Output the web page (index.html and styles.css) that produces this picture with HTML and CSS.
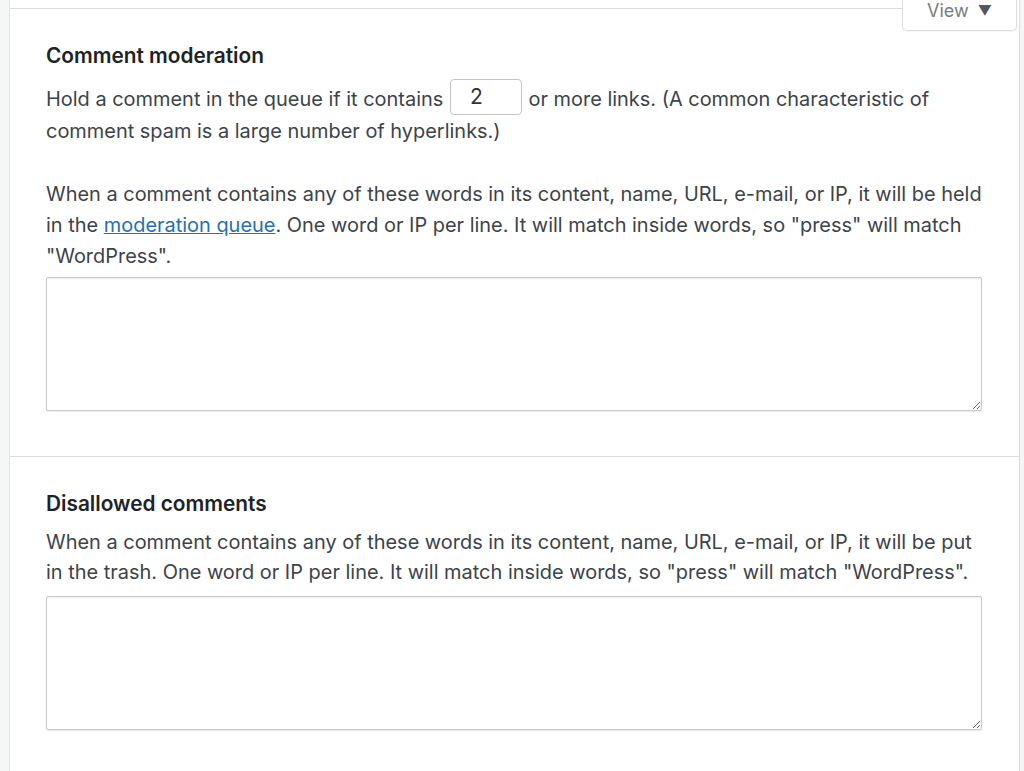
FILE: index.html
```html
<!DOCTYPE html>
<html lang="en">
<head>
<meta charset="utf-8">
<title>Discussion Settings</title>
<link rel="stylesheet" href="styles.css">
</head>
<body>
<div class="panel">
  <div class="topbar">
    <div class="topline"></div>
    <button class="view-tab" type="button">View <span class="caret">▼</span></button>
  </div>

  <section class="section first">
    <h2 class="title">Comment moderation</h2>
    <p class="text links">Hold a comment in the queue if it contains <input class="num" type="text" value="2"> or more links. (A common characteristic of comment spam is a large number of hyperlinks.)</p>
    <p class="text gap">When a comment contains any of these words in its content, name, URL, e-mail, or IP, it will be held in the <a href="#">moderation queue</a>. One word or IP per line. It will match inside words, so "press" will match "WordPress".</p>
    <textarea class="box"></textarea>
  </section>

  <section class="section second">
    <h2 class="title">Disallowed comments</h2>
    <p class="text tight">When a comment contains any of these words in its content, name, URL, e-mail, or IP, it will be put in the trash. One word or IP per line. It will match inside words, so "press" will match "WordPress".</p>
    <textarea class="box box2"></textarea>
  </section>
</div>
</body>
</html>
```

FILE: styles.css
```css
html, body {
  margin: 0;
  padding: 0;
  height: 100%;
}
body {
  background: #f5f6f6;
  font-family: Inter, "Noto Sans", "Liberation Sans", sans-serif;
  color: #3c434a;
  overflow: hidden;
}
.panel {
  margin: 0 4px 0 9px;
  min-height: 100%;
  background: #fff;
  border-left: 1px solid #e2e3e4;
  border-right: 1px solid #dcdcde;
  box-sizing: border-box;
}
.topbar {
  display: flex;
  align-items: flex-start;
  height: 30px;
}
.topline {
  flex: 1;
  height: 8px;
  border-bottom: 1px solid #dcdcde;
}
.view-tab {
  width: 115px;
  height: 31px;
  margin: 0 2px 0 0;
  padding: 0 0 10px 0;
  border: 1px solid #dcdcde;
  border-top: none;
  border-radius: 0 0 5px 5px;
  background: #fff;
  box-shadow: 0 1px 1px rgba(0,0,0,0.04);
  font-family: inherit;
  font-size: 18px;
  color: #787c82;
  text-align: center;
}
.caret {
  font-size: 14px;
  color: #50575e;
  margin-left: 4px;
  position: relative;
  top: -1px;
}
.section {
  padding: 0 30px 0 36px;
}
.first {
  padding-top: 14px;
  padding-bottom: 45px;
  border-bottom: 1px solid #dcdcde;
}
.second {
  padding-top: 35px;
}
.title {
  margin: 0 0 15px 0;
  font-size: 20.8px;
  line-height: 24px;
  font-weight: 600;
  color: #1d2327;
}
.second .title {
  margin-bottom: 11px;
}
.text {
  margin: 0;
  font-size: 19.95px;
  line-height: 31px;
}
.text.links {
  line-height: 32px;
}
.text.gap {
  margin-top: 32px;
}
.text.tight {
  line-height: 30px;
}
.num {
  width: 72px;
  height: 36px;
  box-sizing: border-box;
  vertical-align: middle;
  margin: -8px 1px 0 1px;
  padding: 0 0 0 19px;
  border: 1px solid #c3c4c7;
  border-radius: 4px;
  font-family: inherit;
  font-size: 21px;
  color: #2c3338;
}
a {
  color: #2271b1;
  text-decoration: underline;
}
.box {
  display: block;
  width: 936px;
  height: 134px;
  margin-top: 5px;
  box-sizing: border-box;
  border: 1px solid #c8c9cc;
  border-radius: 2px;
  box-shadow: inset 0 1px 2px rgba(0,0,0,0.07), 0 1px 1px rgba(0,0,0,0.08);
  background: #fff;
  font-family: inherit;
  font-size: 19px;
}
.box2 {
  margin-top: 9px;
}
```
